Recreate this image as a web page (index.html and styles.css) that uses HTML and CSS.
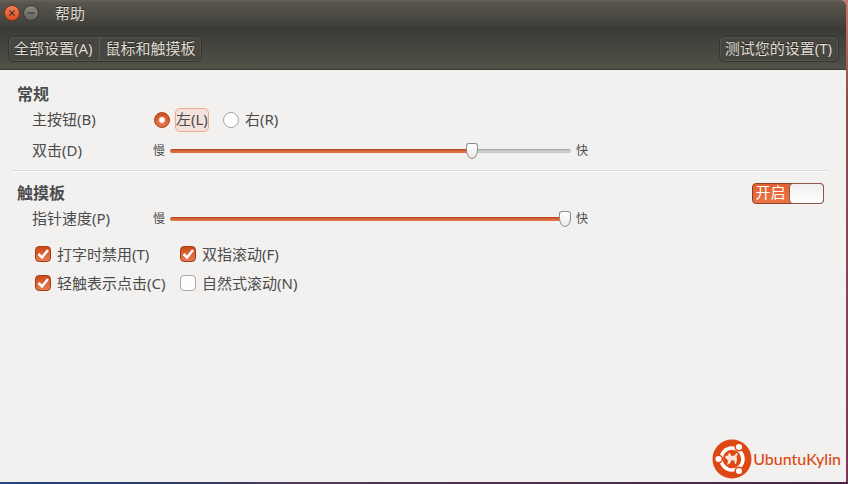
FILE: index.html
```html
<!DOCTYPE html>
<html lang="zh-CN">

<head>
  <meta charset="UTF-8">
  <meta name="viewport" content="width=device-width, initial-scale=1.0">
  <title>鼠标和触摸板</title>
  <link rel="stylesheet" href="styles.css">
</head>

<body>
  <div class="window">
    <header class="header">
      <div class="titlebar">
        <button type="button" class="win-btn close" aria-label="关闭">
          <svg viewBox="0 0 16 16"><path d="M5 5l6 6M11 5l-6 6" /></svg>
        </button>
        <button type="button" class="win-btn" aria-label="最小化">
          <svg viewBox="0 0 16 16"><path d="M4 8h8" /></svg>
        </button>
        <span class="title">帮助</span>
      </div>
      <nav class="toolbar">
        <div class="crumbs">
          <button type="button">全部设置(A)</button>
          <button type="button">鼠标和触摸板</button>
        </div>
        <div class="crumbs">
          <button type="button">测试您的设置(T)</button>
        </div>
      </nav>
    </header>

    <main class="content">
      <section class="section">
        <div class="section-head">
          <h2>常规</h2>
        </div>
        <div class="row" role="radiogroup" aria-labelledby="primary">
          <span class="row-label" id="primary">主按钮(B)</span>
          <div class="radios">
            <input type="radio" name="primary" id="left" checked>
            <label for="left" class="focused">左(L)</label>
            <input type="radio" name="primary" id="right">
            <label for="right">右(R)</label>
          </div>
        </div>
        <div class="row tall">
          <label class="row-label" for="double">双击(D)</label>
          <div class="scale">
            <span>慢</span>
            <input type="range" id="double" min="0" max="100" value="76" style="--fill: 76%">
            <span>快</span>
          </div>
        </div>
      </section>

      <section class="section">
        <div class="section-head">
          <h2>触摸板</h2>
          <button type="button" class="switch" role="switch" aria-checked="true">
            <span class="switch-text">开启</span>
            <span class="knob"></span>
          </button>
        </div>
        <div class="row">
          <label class="row-label" for="speed">指针速度(P)</label>
          <div class="scale">
            <span>慢</span>
            <input type="range" id="speed" min="0" max="100" value="100" style="--fill: 100%">
            <span>快</span>
          </div>
        </div>
        <div class="checks">
          <label><input type="checkbox" checked>打字时禁用(T)</label>
          <label><input type="checkbox" checked>双指滚动(F)</label>
          <label><input type="checkbox" checked>轻触表示点击(C)</label>
          <label><input type="checkbox">自然式滚动(N)</label>
        </div>
      </section>
    </main>

    <footer class="brand">
      <svg class="logo" viewBox="0 0 40 40">
        <circle cx="20" cy="20" r="19.500" fill="#dd4814" />
        <circle cx="20" cy="20" r="11" fill="none" stroke="#fff" stroke-width="3.500" />
        <!-- heads -->
        <g fill="#fff" stroke="#dd4814" stroke-width="1.500">
          <circle cx="6.500" cy="20" r="3.800" />
          <circle cx="27" cy="8" r="3.800" />
          <circle cx="27" cy="32" r="3.800" />
        </g>
        <!-- kylin -->
        <path fill="#fbe3da" d="M13.500 17l2.500-.5 1-3 1.500 1.500 .8 2 3.200-.5 2-2.500 1.500 1-1.500 2.500 .5 3-1 4.500h-1l-.8-3.500-2.700-.3-1.500 3-3 1.800 1-3.500-1-2.500-1.500-.5z" />
      </svg>
      <span>UbuntuKylin</span>
    </footer>
  </div>
</body>

</html>
```
FILE: styles.css
```css
* {
  box-sizing: border-box;
}

body {
  margin: 0;
  min-height: 100vh;
  display: flex;
  padding: 0 2px 2px 0;
  background:
    linear-gradient(90deg, #24477f, #2c3f68 20%, #503a5c 35%, #4a2440) bottom / 100% 2px no-repeat,
    linear-gradient(#c9796b, #8b4e4a 20%, #85455a 60%, #7a3458);
  font-family: "Noto Sans", "Noto Sans CJK SC", sans-serif;
  font-size: 15px;
  line-height: 20px;
  color: #4c4c4c;
}

button {
  font: inherit;
  color: inherit;
}

.window {
  flex: 1;
  display: flex;
  flex-direction: column;
  background: #f2f1f0;
  border-radius: 0 5px 0 0;
  overflow: hidden;
}

/* HEADER */
.header {
  color: #dfdbd2;
  border-bottom: 1px solid #3a3934;
  text-shadow: 0 -1px 0 #2b2a26;
}

.titlebar {
  display: flex;
  align-items: center;
  gap: 3px;
  height: 28px;
  padding: 0 4px 2px;
  background: linear-gradient(#66645a, #58564d 10%, #3e3d39);
}

.win-btn {
  width: 16px;
  height: 16px;
  padding: 0;
  border: 1px solid #3a3935;
  border-radius: 50%;
  background: linear-gradient(#8a8880, #66645e);
}

.win-btn.close {
  border-color: #7c341b;
  background: linear-gradient(#f58059, #df4e1f);
}

.win-btn svg {
  display: block;
  width: 14px;
  height: 14px;
  fill: none;
  stroke: #35332e;
  stroke-width: 1.2;
}

.title {
  margin-left: 13px;
}

.toolbar {
  display: flex;
  justify-content: space-between;
  padding: 7px 7px 7px 8px;
  background: linear-gradient(#3c3b37, #525148);
  border-top: 1px solid #3a3935;
}

.crumbs {
  display: flex;
  border: 1px solid #36352f;
  border-radius: 5px;
  background: #474640;
  box-shadow: inset 0 0 0 1px #54534b;
}

.crumbs button {
  height: 24px;
  padding: 0 5px 2px;
  border: 0;
  background: none;
  text-shadow: inherit;
}

.crumbs button:first-child {
  padding-right: 6px;
}

.crumbs button + button {
  padding-left: 6px;
  border-left: 1px solid #5c5b53;
}

/* CONTENT */
.content {
  flex: 1;
  padding: 12px 17px 0 12px;
}

.section + .section {
  margin-top: 2px;
  padding-top: 10px;
  border-top: 1px solid #dcdad8;
  box-shadow: inset 0 1px 0 #fff;
}

.section-head {
  display: flex;
  justify-content: space-between;
  align-items: center;
  height: 24px;
  padding: 0 5px;
}

h2 {
  margin: 0;
  font-size: 16px;
  line-height: 20px;
  font-weight: bold;
}

.row {
  display: flex;
  align-items: center;
  min-height: 27px;
  padding-left: 20px;
}

.row.tall {
  min-height: 35px;
}

.row-label {
  width: 121px;
  padding-bottom: 2px;
}

.radios {
  display: flex;
  align-items: center;
  padding-left: 1px;
}

.radios label {
  margin: 0 14px 0 5px;
  padding: 0 0 2px;
  border: 1px solid transparent;
  border-radius: 5px;
}

.radios .focused {
  border-color: #f0a88c;
  background: #f3e2db;
}

input {
  appearance: none;
  margin: 0;
}

input[type="radio"],
input[type="checkbox"] {
  flex: none;
  width: 16px;
  height: 16px;
  border: 1px solid #aaa8a6;
  background: linear-gradient(#fdfdfd, #fff);
}

input[type="radio"] {
  border-radius: 50%;
}

input[type="radio"]:checked {
  border-color: #a8421c;
  background: radial-gradient(circle, #fff 0 2px, #fff0 4px), linear-gradient(#cf4e1c, #e57548);
}

input[type="checkbox"] {
  border-radius: 4px;
}

input[type="checkbox"]:checked {
  border-color: #a03c18;
  background:
    url("data:image/svg+xml,%3Csvg xmlns='http://www.w3.org/2000/svg' viewBox='0 0 14 14'%3E%3Cpath d='M2.500 7l3.500 3.500 6-7.500' fill='none' stroke='white' stroke-width='2.500'/%3E%3C/svg%3E") center / 14px 14px no-repeat,
    linear-gradient(#cf4a17, #e57e57);
}

.scale {
  flex: 1;
  max-width: 435px;
  display: flex;
  align-items: center;
  gap: 5px;
  font-size: 12px;
}

input[type="range"] {
  flex: 1;
  min-width: 0;
  height: 16px;
  background: none;
}

input[type="range"]::-webkit-slider-runnable-track {
  height: 4px;
  border-radius: 2px;
  background:
    linear-gradient(#a8431c, #e0683a 50%, #de7549) left / var(--fill) 100% no-repeat,
    linear-gradient(#9c9a98, #d2d0ce 50%, #c8c6c4);
}

input[type="range"]::-webkit-slider-thumb {
  appearance: none;
  width: 12px;
  height: 16px;
  margin-top: -6px;
  border: 1px solid #8f8d8b;
  border-radius: 3px 3px 6px 6px / 3px 3px 9px 9px;
  background: linear-gradient(#fff, #ebebea);
}

.switch {
  display: flex;
  width: 72px;
  height: 21px;
  padding: 0;
  border: 1px solid #8d3d24;
  border-radius: 4px;
  background: linear-gradient(#e2602f, #ec7444);
  color: #fff;
  line-height: 17px;
}

.switch-text {
  flex: 1;
  padding-right: 2px;
}

.knob {
  width: 35px;
  height: 21px;
  margin: -1px;
  border: 1px solid #8d5a48;
  border-radius: 4px;
  background: linear-gradient(#f0efee, #fff);
}

.checks {
  display: grid;
  grid-template-columns: 145px auto;
  justify-content: start;
  margin-top: 8px;
  padding-left: 23px;
}

.checks label {
  display: flex;
  align-items: center;
  gap: 6px;
  height: 29px;
  padding-bottom: 1px;
  white-space: nowrap;
}

/* BRAND */
.brand {
  display: flex;
  justify-content: flex-end;
  align-items: center;
  gap: 1px;
  padding: 0 5px 3px;
  color: #dd4814;
  font-family: Lato, sans-serif;
  font-size: 16px;
  font-weight: 500;
}

.logo {
  width: 40px;
  height: 40px;
}
```
